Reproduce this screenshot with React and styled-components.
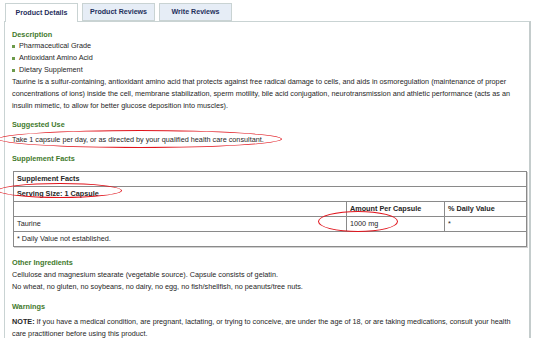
import styled, { createGlobalStyle } from "styled-components";

const GlobalStyle = createGlobalStyle`
  body {
    margin: 0;
    background: #ffffff;
    font-family: "Liberation Sans", Arial, sans-serif;
    color: #262626;
  }
`;

const Page = styled.div`
  position: relative;
  width: 538px;
  height: 338px;
  overflow: hidden;
  padding: 3px 0 0 4px;
  box-sizing: border-box;
`;

const TabBar = styled.div`
  display: flex;
  gap: 4px;
  padding-left: 1px;
  height: 18px;
`;

const Tab = styled.div`
  width: 73px;
  height: ${({ active }) => (active ? "19px" : "18px")};
  box-sizing: border-box;
  display: flex;
  align-items: center;
  justify-content: center;
  font-size: 7.1px;
  font-weight: bold;
  color: #1f2f5c;
  background: ${({ active }) => (active ? "#ffffff" : "#e6edf6")};
  border: 1px solid #c9d3d3;
  border-bottom: ${({ active }) => (active ? "none" : "1px solid #c9d3d3")};
  position: relative;
  z-index: 1;
`;

const Panel = styled.div`
  width: 527px;
  box-sizing: border-box;
  border: 1px solid #c9d3d3;
  border-right: 2px solid #c4cccc;
  border-bottom: none;
  padding: 7px 8px 0 7px;
  height: 320px;
  font-size: 7.25px;
  line-height: 12px;
`;

const Heading = styled.div`
  color: #3f7a2c;
  font-weight: bold;
  font-size: 7.3px;
  margin: ${({ mt }) => mt || 0}px 0 ${({ mb }) => mb || 0}px;
`;

const BulletList = styled.ul`
  list-style: none;
  margin: 0;
  padding: 0;
`;

const Bullet = styled.li`
  display: flex;
  align-items: center;
  gap: 4px;
  &::before {
    content: "";
    width: 3px;
    height: 3px;
    background: #6c9a4a;
  }
`;

const Para = styled.p`
  margin: 0;
`;

const Note = styled.strong`
  margin-right: 2px;
`;

const Facts = styled.table`
  border-collapse: collapse;
  width: 514px;
  margin-left: 1px;
  font-size: 7.25px;
  border: 1px solid #7d7d7d;
  box-shadow: 1px 1px 0 #d0d0d0;
  td {
    border: 1px solid #8a8a8a;
    padding: 0 3px;
    height: 14px;
    line-height: 12px;
    vertical-align: middle;
  }
`;

const Cell = styled.td`
  font-weight: ${({ bold }) => (bold ? "bold" : "normal")};
  width: ${({ w }) => w || "auto"};
`;

const Ring = styled.div`
  position: absolute;
  border: 1.4px solid #e0141c;
  border-radius: 50%;
  box-sizing: border-box;
  pointer-events: none;
`;

export default function App() {
  return (
    <Page>
      <GlobalStyle />
      <TabBar>
        <Tab active>Product Details</Tab>
        <Tab>Product Reviews</Tab>
        <Tab>Write Reviews</Tab>
      </TabBar>
      <Panel>
        <Heading mb={-1}>Description</Heading>
        <BulletList>
          <Bullet>Pharmaceutical Grade</Bullet>
          <Bullet>Antioxidant Amino Acid</Bullet>
          <Bullet>Dietary Supplement</Bullet>
        </BulletList>
        <Para>
          Taurine is a sulfur-containing, antioxidant amino acid that protects against free radical
          damage to cells, and aids in osmoregulation (maintenance of proper concentrations of ions)
          inside the cell, membrane stabilization, sperm motility, bile acid conjugation,
          neurotransmission and athletic performance (acts as an insulin mimetic, to allow for
          better glucose deposition into muscles).
        </Para>
        <Heading mt={7} mb={3}>Suggested Use</Heading>
        <Para>Take 1 capsule per day, or as directed by your qualified health care consultant.</Para>
        <Heading mt={7} mb={6}>Supplement Facts</Heading>
        <Facts>
          <tbody>
            <tr>
              <Cell bold colSpan={3}>Supplement Facts</Cell>
            </tr>
            <tr>
              <Cell bold colSpan={3}>Serving Size: 1 Capsule</Cell>
            </tr>
            <tr>
              <Cell w="326px"></Cell>
              <Cell bold w="91px">Amount Per Capsule</Cell>
              <Cell bold>% Daily Value</Cell>
            </tr>
            <tr>
              <Cell>Taurine</Cell>
              <Cell>1000 mg</Cell>
              <Cell>*</Cell>
            </tr>
            <tr>
              <Cell colSpan={3}>* Daily Value not established.</Cell>
            </tr>
          </tbody>
        </Facts>
        <Heading mt={10} mb={0}>Other Ingredients</Heading>
        <Para>Cellulose and magnesium stearate (vegetable source). Capsule consists of gelatin.</Para>
        <Para>
          No wheat, no gluten, no soybeans, no dairy, no egg, no fish/shellfish, no peanuts/tree
          nuts.
        </Para>
        <Heading mt={8} mb={3}>Warnings</Heading>
        <Para>
          <Note>NOTE:</Note>If you have a medical condition, are pregnant, lactating, or trying to
          conceive, are under the age of 18, or are taking medications, consult your health care
          practitioner before using this product.
        </Para>
      </Panel>
      <Ring style={{ left: -2, top: 130, width: 284, height: 18 }} />
      <Ring style={{ left: -2, top: 183, width: 124, height: 15 }} />
      <Ring style={{ left: 318, top: 211, width: 80, height: 21 }} />
    </Page>
  );
}
